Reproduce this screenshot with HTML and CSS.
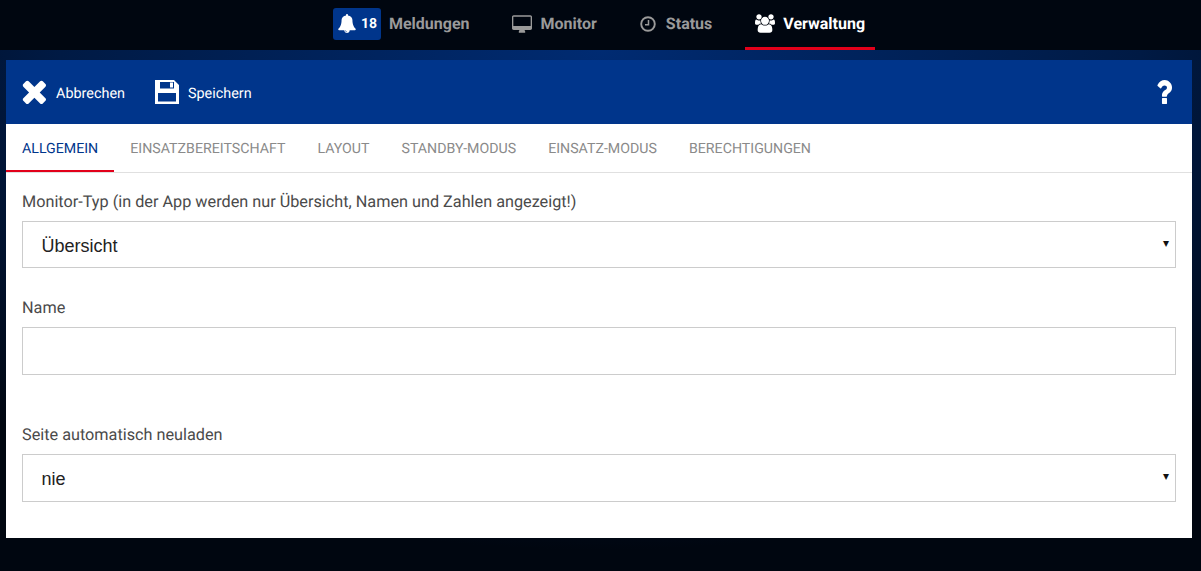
FILE: index.html
```html
<!DOCTYPE html>
<html lang="de">
<head>
<meta charset="utf-8">
<title>Verwaltung</title>
<link rel="stylesheet" href="styles.css">
</head>
<body>
<nav class="topnav">
  <a class="nav-item nav-alerts">
    <span class="badge">
      <svg class="bell" viewBox="64 0 1664 1792"><path fill="currentColor" d="M912 1696q0-16-16-16-59 0-101.500-42.500t-42.500-101.500q0-16-16-16t-16 16q0 73 51.500 124.500t124.500 51.500q16 0 16-16zm816-288q0 52-38 90t-90 38h-448q0 106-75 181t-181 75-181-75-75-181h-448q-52 0-90-38t-38-90q50-42 91-88t85-119.500 74.500-158.500 50-206 19.500-260q0-152 117-282.500t307-158.500q-8-19-8-39 0-40 28-68t68-28 68 28 28 68q0 20-8 39 190 28 307 158.500t117 282.500q0 139 19.500 260t50 206 74.500 158.500 85 119.500 91 88z"/></svg>
      <span class="badge-num">18</span>
    </span>
    <span>Meldungen</span>
  </a>
  <a class="nav-item">
    <svg class="ico-desktop" viewBox="0 0 1920 1664"><path fill="currentColor" d="M1792 992v-832q0-13-9.500-22.500t-22.500-9.500h-1600q-13 0-22.500 9.500t-9.500 22.500v832q0 13 9.500 22.500t22.500 9.500h1600q13 0 22.500-9.500t9.500-22.500zm128-832v1088q0 66-47 113t-113 47h-544q0 37 16 77.500t32 71 16 43.500q0 26-19 45t-45 19h-512q-26 0-45-19t-19-45q0-14 16-44t32-70 16-78h-544q-66 0-113-47t-47-113v-1088q0-66 47-113t113-47h1600q66 0 113 47t47 113z"/></svg>
    <span>Monitor</span>
  </a>
  <a class="nav-item">
    <svg class="ico-clock" viewBox="0 0 16 16"><circle cx="8" cy="8" r="6.800" fill="none" stroke="currentColor" stroke-width="1.900"/><path d="M8.500 4v4.700H5" fill="none" stroke="currentColor" stroke-width="1.500"/></svg>
    <span>Status</span>
  </a>
  <a class="nav-item active">
    <svg class="ico-users" viewBox="0 0 1920 1792"><path fill="currentColor" d="M593 896q-162 5-265 128h-134q-82 0-138-40.500t-56-118.500q0-353 124-353 6 0 43.500 21t97.500 42.500 119 21.500q67 0 133-23-5 37-5 66 0 139 81 256zm1071 637q0 120-73 189.500t-194 69.500h-874q-121 0-194-69.500t-73-189.500q0-53 3.500-103.500t14-109 26.500-108.500 43-97.500 62-81 85.500-53.500 111.500-20q10 0 43 21.500t73 48 107 48 135 21.500 135-21.500 107-48 73-48 43-21.500q61 0 111.500 20t85.500 53.500 62 81 43 97.500 26.500 108.500 14 109 3.500 103.500zm-1024-1277q0 106-75 181t-181 75-181-75-75-181 75-181 181-75 181 75 75 181zm704 384q0 159-112.500 271.500t-271.500 112.500-271.500-112.500-112.500-271.500 112.500-271.500 271.500-112.500 271.500 112.500 112.500 271.500zm576 225q0 78-56 118.500t-138 40.500h-134q-103-123-265-128 81-117 81-256 0-29-5-66 66 23 133 23 59 0 119-21.500t97.500-42.500 43.500-21q124 0 124 353zm-128-609q0 106-75 181t-181 75-181-75-75-181 75-181 181-75 181 75 75 181z"/></svg>
    <span>Verwaltung</span>
  </a>
</nav>

<main class="panel">
  <header class="toolbar">
    <a class="tool">
      <svg class="ico-times" viewBox="262 326 1228 1228"><path fill="currentColor" d="M1490 1322q0 40-28 68l-136 136q-28 28-68 28t-68-28l-294-294-294 294q-28 28-68 28t-68-28l-136-136q-28-28-28-68t28-68l294-294-294-294q-28-28-28-68t28-68l136-136q28-28 68-28t68 28l294 294 294-294q28-28 68-28t68 28l136 136q28 28 28 68t-28 68l-294 294 294 294q28 28 28 68z"/></svg>
      <span class="tool-text">Abbrechen</span>
    </a>
    <a class="tool">
      <svg class="ico-save" viewBox="0 0 24 24"><path fill="#fff" fill-rule="evenodd" d="M0 0H19L24 5V24H0ZM5 2V8.500H19V2ZM3 13V21.500H21V13Z"/><rect x="15" y="2.500" width="3" height="5" fill="#fff"/></svg>
      <span class="tool-text">Speichern</span>
    </a>
    <a class="help">
      <svg class="ico-help" viewBox="390 256 1014 1280" preserveAspectRatio="none"><path fill="currentColor" d="M1088 1256v240q0 16-12 28t-28 12h-240q-16 0-28-12t-12-28v-240q0-16 12-28t28-12h240q16 0 28 12t12 28zm316-600q0 54-15.500 101t-35 76.500-55 59.500-57.500 43.500-61 35.500q-41 23-68.500 65t-27.500 67q0 17-12 32.500t-28 15.500h-240q-15 0-25.500-18.500t-10.500-37.500v-45q0-83 65-156.500t143-108.500q59-27 84-56t25-76q0-42-46.500-74t-107.500-32q-65 0-108 29-35 25-107 115-13 16-31 16-12 0-25-8l-164-125q-13-10-15.500-25t5.500-28q160-266 464-266 80 0 161 31t146 83 106 127.500 41 158.500z"/></svg>
    </a>
  </header>

  <div class="tabs">
    <a class="tab active">Allgemein</a>
    <a class="tab">Einsatzbereitschaft</a>
    <a class="tab">Layout</a>
    <a class="tab">Standby-Modus</a>
    <a class="tab">Einsatz-Modus</a>
    <a class="tab">Berechtigungen</a>
  </div>

  <form class="form">
    <div class="field">
      <label class="label" for="typ">Monitor-Typ (in der App werden nur Übersicht, Namen und Zahlen angezeigt!)</label>
      <div class="select-wrap">
        <select id="typ" class="control control-short"><option>Übersicht</option></select>
      </div>
    </div>
    <div class="field field-name">
      <label class="label" for="name">Name</label>
      <input id="name" class="control" type="text">
    </div>
    <div class="field field-reload">
      <label class="label" for="reload">Seite automatisch neuladen</label>
      <div class="select-wrap">
        <select id="reload" class="control"><option>nie</option></select>
      </div>
    </div>
  </form>
</main>
</body>
</html>
```
FILE: styles.css
```css
* { box-sizing: border-box; }

html, body { height: 100%; }

body {
  margin: 0;
  height: 571px;
  overflow: hidden;
  font-family: Roboto, "Liberation Sans", sans-serif;
  text-rendering: geometricPrecision;
  background-color: #000610;
  background-image: radial-gradient(ellipse 900px 500px at 50% 50px, #002b72 0%, #001a44 60%, #000610 100%);
}

.topnav {
  height: 50px;
  background: #000610;
  display: flex;
  justify-content: center;
  gap: 23px;
  padding-right: 3px;
}

.nav-item {
  display: flex;
  align-items: center;
  gap: 9px;
  height: 50px;
  padding: 0 10px;
  color: #9a9a9a;
  font-size: 16px;
  font-weight: 700;
  border-bottom: 3px solid transparent;
}

.nav-alerts {
  gap: 8px;
  margin-right: -1px;
}

.nav-item.active {
  gap: 8px;
  color: #fff;
  border-bottom-color: #e2001a;
}

.badge {
  display: flex;
  align-items: center;
  gap: 5px;
  width: 48px;
  height: 32px;
  padding-left: 5px;
  background: #00358b;
  border-radius: 3px;
  color: #fff;
  font-size: 14px;
}

.bell { width: 18px; height: 19px; }
.ico-desktop { width: 20px; height: 18px; }
.ico-clock { width: 16px; height: 16px; margin-right: 1px; }
.ico-users { width: 20px; height: 19px; }

.panel {
  margin: 10px 9px 0 6px;
  height: 478px;
  background: #fff;
}

.toolbar {
  height: 64px;
  background: #00358b;
  display: flex;
  align-items: center;
  gap: 30px;
  padding: 0 20px 0 16px;
  color: #fff;
}

.tool {
  display: flex;
  align-items: center;
  gap: 9px;
  font-size: 14.4px;
}

.tool-text { margin-top: 2px; }

.ico-times { width: 24px; height: 24px; margin-right: 1px; }
.ico-save { width: 24px; height: 24px; }

.help { margin-left: auto; display: flex; }
.ico-help { width: 16px; height: 24px; }

.tabs {
  display: flex;
  height: 49px;
  border-bottom: 1px solid #e0e0e0;
}

.tab {
  height: 48px;
  padding: 3px 16px 0;
  display: flex;
  align-items: center;
  color: #8a8a8a;
  font-size: 14.2px;
  text-transform: uppercase;
  border-bottom: 2px solid transparent;
}

.tab.active {
  color: #00358b;
  border-bottom-color: #e2001a;
}

.form {
  padding: 19px 16px 0;
}

.field-name { margin-top: 30px; }
.field-reload { margin-top: 50px; }

.label {
  display: block;
  height: 20px;
  line-height: 20px;
  margin-bottom: 9px;
  color: #4a4a4a;
  font-size: 16.24px;
}

.control {
  display: block;
  width: 100%;
  height: 48px;
  padding: 2px 19px 0 18.500px;
  background: #fff;
  border: 1px solid #ccc;
  border-radius: 0;
  color: #222;
  font-family: "Liberation Sans", Arial, sans-serif;
  font-size: 18px;
  appearance: none;
  outline: none;
}

.control-short { height: 47px; }

.select-wrap { position: relative; }

.select-wrap::after {
  content: "▾";
  position: absolute;
  right: 7px;
  top: 50%;
  transform: translateY(-65%);
  color: #111;
  font-family: "DejaVu Sans", sans-serif;
  font-size: 12px;
  pointer-events: none;
}
```
